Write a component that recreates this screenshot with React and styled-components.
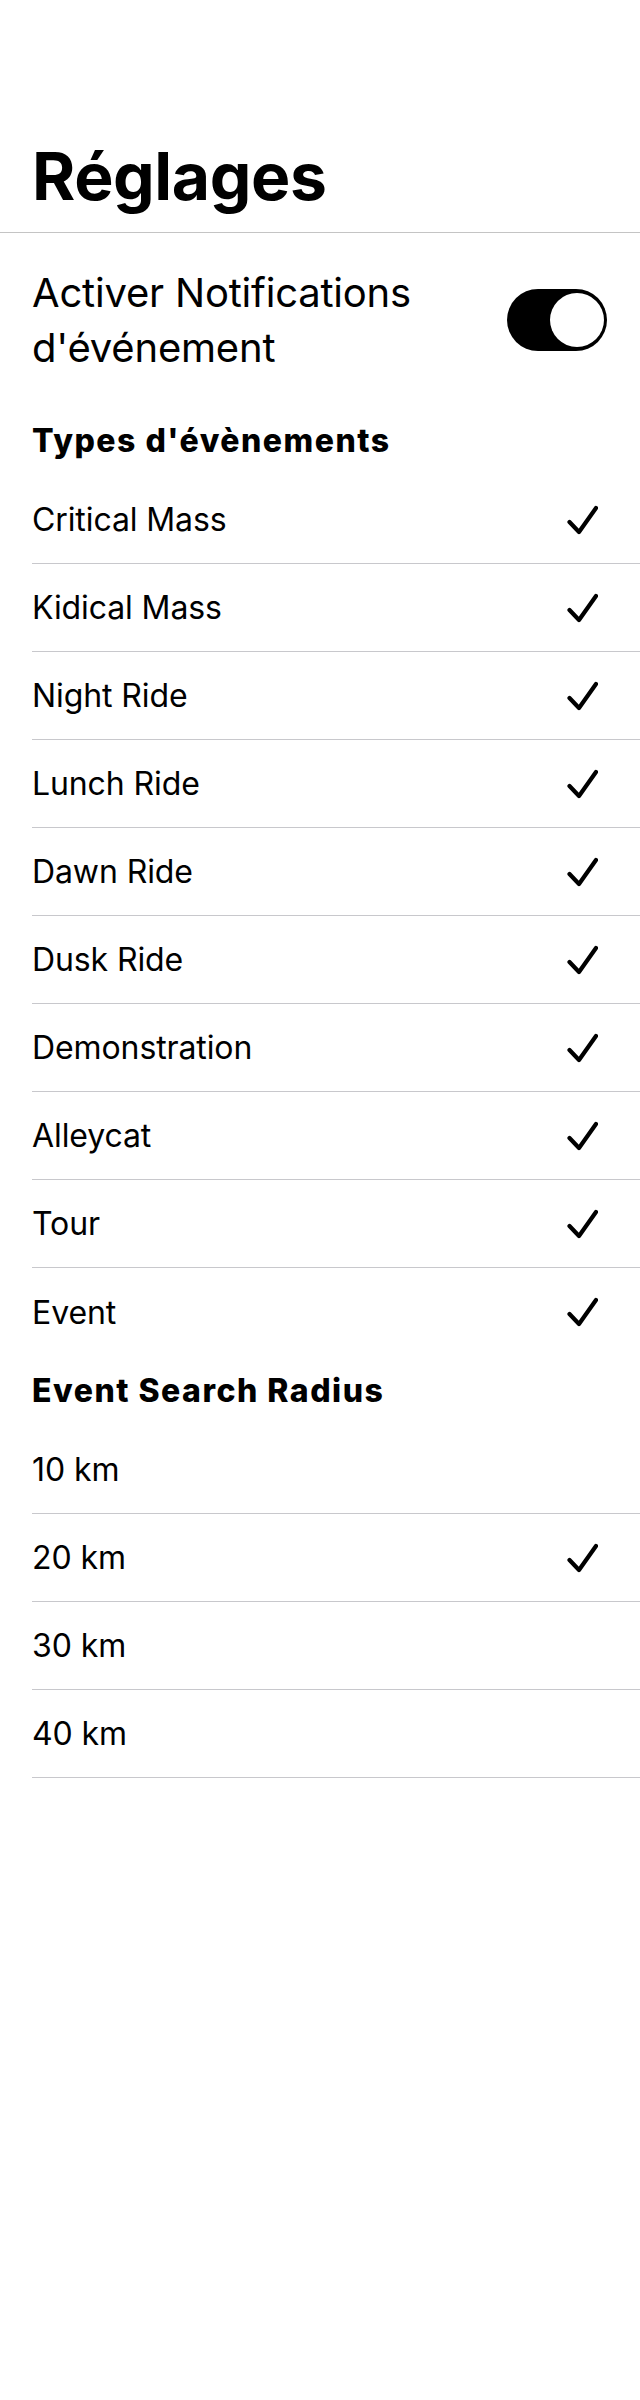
import React from 'react';
import styled, { createGlobalStyle } from 'styled-components';

const GlobalStyle = createGlobalStyle`
  html, body {
    margin: 0;
    padding: 0;
    background: #ffffff;
  }
  body {
    font-family: Inter, "Noto Sans", "Liberation Sans", sans-serif;
    color: #000000;
  }
`;

const Page = styled.div`
  width: 640px;
  min-height: 2400px;
  background: #ffffff;
`;

const Header = styled.header`
  padding: 136px 32px 16px;
  border-bottom: 1px solid #c4c4c4;
`;

const Title = styled.h1`
  margin: 0;
  font-size: 66px;
  line-height: 80px;
  font-weight: 700;
  letter-spacing: -0.4px;
`;

const Content = styled.div`
  padding-left: 32px;
`;

const ToggleRow = styled.div`
  display: flex;
  align-items: center;
  justify-content: space-between;
  gap: 24px;
  padding: 32px 33px 31px 0;
`;

const ToggleLabel = styled.div`
  font-size: 40px;
  line-height: 55px;
  letter-spacing: -0.2px;
  max-width: 430px;
`;

const Switch = styled.div`
  flex: none;
  display: flex;
  align-items: center;
  justify-content: ${(props) => (props.$on ? 'flex-end' : 'flex-start')};
  width: 100px;
  height: 62px;
  box-sizing: border-box;
  padding: 0 3px;
  border-radius: 31px;
  background: ${(props) => (props.$on ? '#000000' : '#e5e5ea')};
`;

const Knob = styled.div`
  width: 54px;
  height: 54px;
  border-radius: 50%;
  background: #ffffff;
`;

const SectionTitle = styled.h2`
  margin: 0;
  height: 70px;
  font-size: 32px;
  line-height: 70px;
  font-weight: 800;
  letter-spacing: 1.5px;
`;

const List = styled.div`
  display: flex;
  flex-direction: column;
`;

const Row = styled.div`
  display: flex;
  align-items: center;
  justify-content: space-between;
  height: 88px;
  box-sizing: border-box;
  padding-right: 42px;
  border-bottom: ${(props) => (props.$divider ? '1px solid #c8c8cc' : 'none')};
  font-size: 32px;
  letter-spacing: -0.1px;
`;

const Check = () => (
  <svg width="31" height="30" viewBox="0 0 31 30" fill="none">
    <polyline
      points="2.5,17 12,27 29,3"
      stroke="#000"
      strokeWidth="4.2"
      strokeLinecap="round"
      strokeLinejoin="round"
    />
  </svg>
);

const eventTypes = [
  'Critical Mass',
  'Kidical Mass',
  'Night Ride',
  'Lunch Ride',
  'Dawn Ride',
  'Dusk Ride',
  'Demonstration',
  'Alleycat',
  'Tour',
  'Event',
];

const radii = [10, 20, 30, 40];
const selectedRadius = 20;

const App = () => (
  <Page>
    <GlobalStyle />
    <Header>
      <Title>Réglages</Title>
    </Header>
    <Content>
      <ToggleRow>
        <ToggleLabel>Activer Notifications d'événement</ToggleLabel>
        <Switch $on>
          <Knob />
        </Switch>
      </ToggleRow>

      <SectionTitle>Types d'évènements</SectionTitle>
      <List>
        {eventTypes.map((name, i) => (
          <Row key={name} $divider={i < eventTypes.length - 1}>
            {name}
            <Check />
          </Row>
        ))}
      </List>

      <SectionTitle>Event Search Radius</SectionTitle>
      <List>
        {radii.map((km) => (
          <Row key={km} $divider>
            {km} km
            {km === selectedRadius && <Check />}
          </Row>
        ))}
      </List>
    </Content>
  </Page>
);

export default App;
